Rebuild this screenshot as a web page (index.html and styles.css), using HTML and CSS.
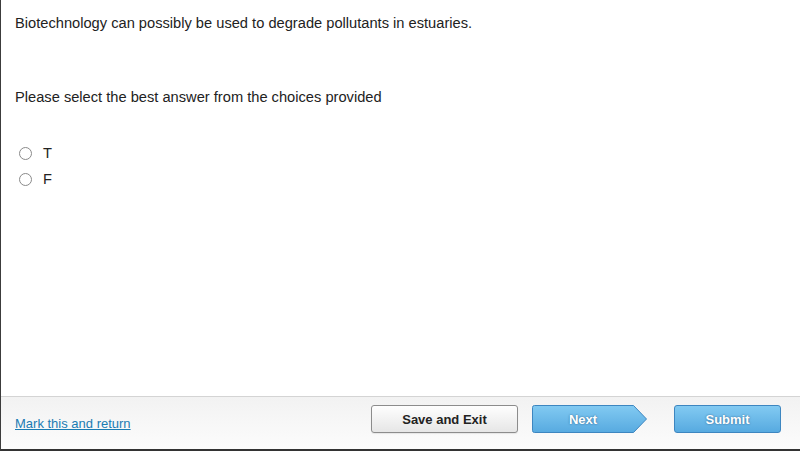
FILE: index.html
```html
<!DOCTYPE html>
<html>
<head>
<meta charset="utf-8">
<link rel="stylesheet" href="styles.css">
</head>
<body>
<div class="page">
  <main class="content">
    <p class="question">Biotechnology can possibly be used to degrade pollutants in estuaries.</p>
    <p class="prompt">Please select the best answer from the choices provided</p>
    <ul class="choices">
      <li class="choice"><span class="radio"></span><span class="label">T</span></li>
      <li class="choice"><span class="radio"></span><span class="label">F</span></li>
    </ul>
  </main>
  <footer class="footer">
    <a class="mark" href="#">Mark this and return</a>
    <div class="actions">
      <button class="btn btn-save">Save and Exit</button>
      <button class="btn btn-next">
        <svg class="next-shape" width="116" height="28" viewBox="0 0 116 28">
          <defs>
            <linearGradient id="g" x1="0" y1="0" x2="0" y2="1">
              <stop offset="0" stop-color="#82caf2"/>
              <stop offset="1" stop-color="#57aae0"/>
            </linearGradient>
          </defs>
          <path d="M2.5 0.5 H101.5 L114.5 14 L101.5 27.5 H2.5 Q0.5 27.5 0.5 25.5 V2.5 Q0.5 0.5 2.5 0.5 Z" fill="url(#g)" stroke="#3d86c0" stroke-width="1"/>
        </svg>
        <span class="next-text">Next</span>
      </button>
      <button class="btn btn-submit">Submit</button>
    </div>
  </footer>
</div>
</body>
</html>
```
FILE: styles.css
```css
html, body {
  margin: 0;
  padding: 0;
  background: #ffffff;
}
body {
  font-family: "Liberation Sans", Arial, sans-serif;
  color: #222222;
}
.page {
  width: 800px;
  height: 451px;
  box-sizing: border-box;
  border-left: 1px solid #3c3c3c;
  border-bottom: 2px solid #333333;
  display: flex;
  flex-direction: column;
}
.content {
  flex: 1;
  padding: 15px 14px 0 14px;
}
.question, .prompt {
  margin: 0;
  font-size: 14.667px;
  line-height: 17px;
}
.prompt {
  margin-top: 57px;
}
.choices {
  list-style: none;
  margin: 34px 0 0 0;
  padding: 0;
}
.choice {
  display: flex;
  align-items: center;
  height: 26px;
  font-size: 14.667px;
  padding-left: 4px;
}
.radio {
  width: 11px;
  height: 11px;
  border: 1px solid #8a8a8a;
  border-radius: 50%;
  background: #fff;
  margin-right: 11px;
}
.label {
  line-height: 17px;
}
.footer {
  height: 53px;
  box-sizing: border-box;
  border-top: 1px solid #d4d4d4;
  background: linear-gradient(#f2f2f2, #fcfcfc);
  display: flex;
  align-items: flex-start;
  justify-content: space-between;
  padding: 8px 19px 0 14px;
}
.mark {
  margin-top: 11px;
  font-size: 13px;
  line-height: 15px;
  color: #1b7cb3;
  text-decoration: underline;
}
.actions {
  display: flex;
  align-items: flex-start;
}
.btn {
  height: 28px;
  box-sizing: border-box;
  font-family: "Liberation Sans", Arial, sans-serif;
  font-size: 13px;
  font-weight: bold;
  padding: 0;
  cursor: pointer;
}
.btn-save {
  width: 147px;
  border: 1px solid #8c8c8c;
  border-radius: 3px;
  background: linear-gradient(#fefefe, #e6e6e6);
  color: #222;
  box-shadow: 0 1px 1px rgba(0,0,0,0.08);
}
.btn-next {
  position: relative;
  width: 116px;
  margin-left: 14px;
  border: none;
  background: transparent;
  color: #fff;
}
.next-shape {
  position: absolute;
  left: 0;
  top: 0;
}
.next-text {
  position: relative;
  display: block;
  width: 102px;
  text-shadow: 0 0 2px rgba(0,40,80,0.6);
}
.btn-submit {
  width: 107px;
  margin-left: 26px;
  border: 1px solid #3d86c0;
  border-radius: 3px;
  background: linear-gradient(#82caf2, #57aae0);
  color: #fff;
  text-shadow: 0 0 2px rgba(0,40,80,0.6);
}
```
